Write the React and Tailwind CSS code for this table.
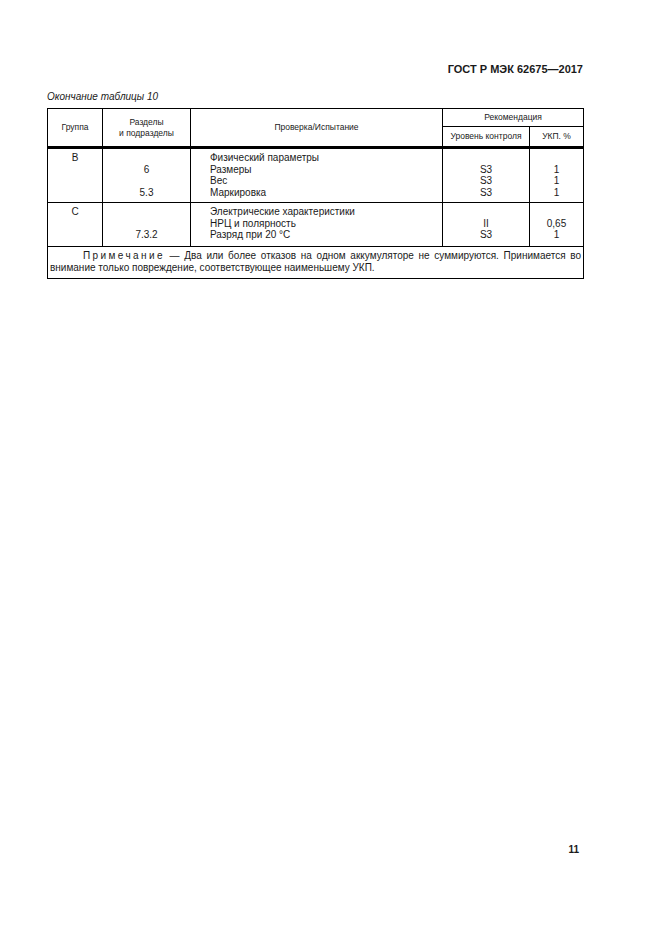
const rows = [
  {
    group: 'В',
    h: 'h-[55px]',
    sections: ['', '6', '', '5.3'],
    checks: ['Физический параметры', 'Размеры', 'Вес', 'Маркировка'],
    level: ['', 'S3', 'S3', 'S3'],
    ukp: ['', '1', '1', '1'],
  },
  {
    group: 'С',
    h: 'h-[44px]',
    sections: ['', '', '7.3.2'],
    checks: ['Электрические характеристики', 'НРЦ и полярность', 'Разряд при 20 °С'],
    level: ['', 'II', 'S3'],
    ukp: ['', '0,65', '1'],
  },
];

const Lines = ({ items }) => (
  <>
    {items.map((t, i) => (
      <div key={i}>{t || '\u00a0'}</div>
    ))}
  </>
);

const cell = 'border border-black align-top pt-[3px] pb-[4px]';

export default function App() {
  return (
    <div
      className="w-[661px] h-[935px] bg-white text-[#1a1a1a] flex flex-col pl-[47px] pr-[78px]"
      style={{ fontFamily: '"Liberation Sans", Arial, sans-serif' }}
    >
      <div className="pt-[63px] text-right text-[11px] leading-[13px] font-bold">
        ГОСТ Р МЭК 62675—2017
      </div>

      <div className="mt-[15px] text-[10px] leading-[12px] italic">Окончание таблицы 10</div>

      <table className="mt-[5px] w-[536px] table-fixed border-collapse border border-black">
        <colgroup>
          <col className="w-[55px]" />
          <col className="w-[88px]" />
          <col className="w-[252px]" />
          <col className="w-[87px]" />
          <col className="w-[54px]" />
        </colgroup>
        <thead className="text-[8.5px] leading-[11px] font-normal">
          <tr>
            <th rowSpan={2} className="border border-black border-b-[3px] border-b-double font-normal align-middle">
              Группа
            </th>
            <th rowSpan={2} className="border border-black border-b-[3px] border-b-double font-normal align-middle">
              Разделы
              <br />и подразделы
            </th>
            <th rowSpan={2} className="border border-black border-b-[3px] border-b-double font-normal align-middle">
              Проверка/Испытание
            </th>
            <th colSpan={2} className="h-[18px] border border-black font-normal align-middle">
              Рекомендация
            </th>
          </tr>
          <tr>
            <th className="h-[21px] border border-black border-b-[3px] border-b-double font-normal align-middle">
              Уровень контроля
            </th>
            <th className="border border-black border-b-[3px] border-b-double font-normal align-middle">
              УКП. %
            </th>
          </tr>
        </thead>
        <tbody className="text-[10px] leading-[11.5px]">
          {rows.map((r) => (
            <tr key={r.group}>
              <td className={`${cell} ${r.h} text-center`}>{r.group}</td>
              <td className={`${cell} text-center`}>
                <Lines items={r.sections} />
              </td>
              <td className={`${cell} pl-[19px]`}>
                <Lines items={r.checks} />
              </td>
              <td className={`${cell} text-center`}>
                <Lines items={r.level} />
              </td>
              <td className={`${cell} text-center`}>
                <Lines items={r.ukp} />
              </td>
            </tr>
          ))}
          <tr>
            <td colSpan={5} className="border border-black px-[2px] pt-[3px] pb-[4px] leading-[12px]">
              <div className="text-justify [text-align-last:justify] indent-[33px]">
                <span className="tracking-[2.4px]">Примечание</span> — Два или более отказов на одном аккумуляторе не суммируются. Принимается во
              </div>
              <div>внимание только повреждение, соответствующее наименьшему УКП.</div>
            </td>
          </tr>
        </tbody>
      </table>

      <div className="mt-auto pb-[79px] pr-[4px] text-right text-[10px] leading-[12px] font-bold">11</div>
    </div>
  );
}
